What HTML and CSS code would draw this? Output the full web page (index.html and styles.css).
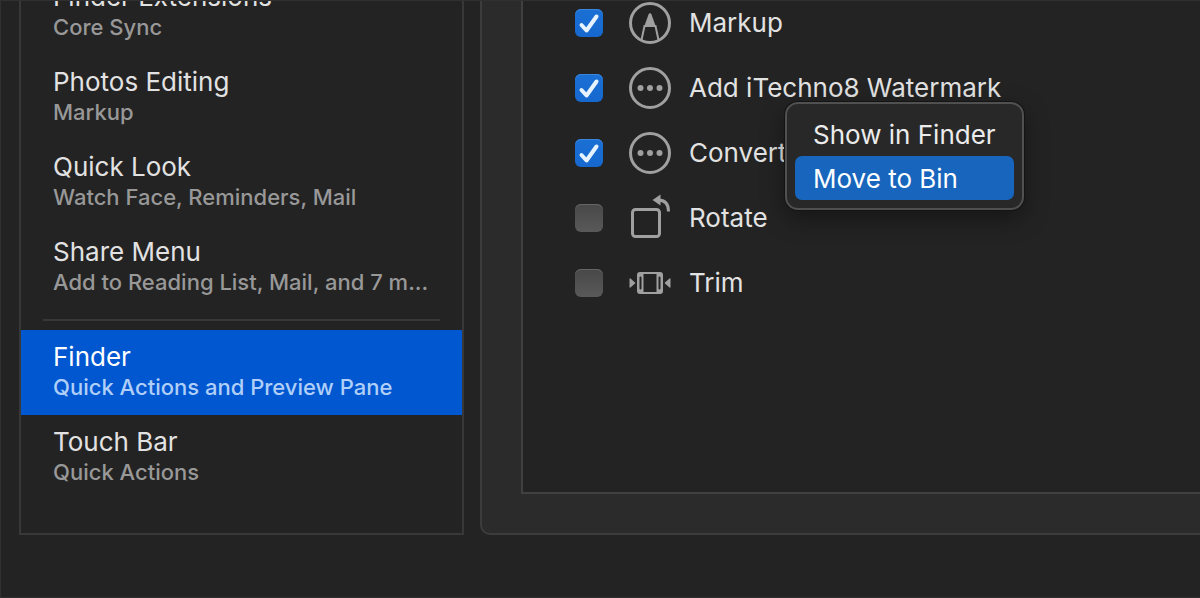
FILE: index.html
```html
<!DOCTYPE html>
<html lang="en">
<head>
    <meta charset="UTF-8">
    <meta name="viewport" content="width=device-width, initial-scale=1.0">
    <title>Extensions</title>
    <link rel="stylesheet" href="styles.css">
</head>
<body>
    <div class="window">
        <nav class="sidebar">
            <div class="categories">
                <a href="#" class="category">
                    <span class="name">Finder Extensions</span>
                    <span class="detail">Core Sync</span>
                </a>
                <a href="#" class="category">
                    <span class="name">Photos Editing</span>
                    <span class="detail">Markup</span>
                </a>
                <a href="#" class="category">
                    <span class="name">Quick Look</span>
                    <span class="detail">Watch Face, Reminders, Mail</span>
                </a>
                <a href="#" class="category">
                    <span class="name">Share Menu</span>
                    <span class="detail">Add to Reading List, Mail, and 7 m...</span>
                </a>
                <hr>
                <a href="#" class="category selected">
                    <span class="name">Finder</span>
                    <span class="detail">Quick Actions and Preview Pane</span>
                </a>
                <a href="#" class="category">
                    <span class="name">Touch Bar</span>
                    <span class="detail">Quick Actions</span>
                </a>
            </div>
        </nav>

        <main class="pane">
            <div class="panel">
                <ul class="actions">
                    <li>
                        <span class="check">
                            <input type="checkbox" id="markup" checked>
                            <svg viewBox="0 0 28 28"><path d="M6.5 16 L11.5 21.5 L21.5 7.5"/></svg>
                        </span>
                        <svg class="icon" viewBox="0 0 42 42">
                            <circle cx="21" cy="21" r="19.5"/>
                            <path class="thin" d="M12.5 38 L15.5 24 H26.5 L29.5 38"/>
                            <path class="solid" d="M15 25 L19.5 12.5 Q21 9.5 22.5 12.5 L27 25 Z"/>
                        </svg>
                        <label for="markup">Markup</label>
                    </li>
                    <li>
                        <span class="check">
                            <input type="checkbox" id="watermark" checked>
                            <svg viewBox="0 0 28 28"><path d="M6.5 16 L11.5 21.5 L21.5 7.5"/></svg>
                        </span>
                        <svg class="icon" viewBox="0 0 42 42">
                            <circle cx="21" cy="21" r="19.5"/>
                            <circle class="solid" cx="11.5" cy="21" r="3"/>
                            <circle class="solid" cx="21" cy="21" r="3"/>
                            <circle class="solid" cx="30.5" cy="21" r="3"/>
                        </svg>
                        <label for="watermark">Add iTechno8 Watermark</label>
                        <div class="menu" role="menu">
                            <button type="button" role="menuitem">Show in Finder</button>
                            <button type="button" role="menuitem" class="active">Move to Bin</button>
                        </div>
                    </li>
                    <li>
                        <span class="check">
                            <input type="checkbox" id="convert" checked>
                            <svg viewBox="0 0 28 28"><path d="M6.5 16 L11.5 21.5 L21.5 7.5"/></svg>
                        </span>
                        <svg class="icon" viewBox="0 0 42 42">
                            <circle cx="21" cy="21" r="19.5"/>
                            <circle class="solid" cx="11.5" cy="21" r="3"/>
                            <circle class="solid" cx="21" cy="21" r="3"/>
                            <circle class="solid" cx="30.5" cy="21" r="3"/>
                        </svg>
                        <label for="convert">Convert</label>
                    </li>
                    <li>
                        <span class="check">
                            <input type="checkbox" id="rotate">
                        </span>
                        <svg class="icon" viewBox="0 0 42 42">
                            <rect x="3.5" y="12.5" width="27" height="27" rx="3"/>
                            <path d="M29 3 C36 3 39.5 7 39.5 14.5"/>
                            <path class="solid" d="M23.5 3 L31.5 -2.5 V8.5 Z"/>
                        </svg>
                        <label for="rotate">Rotate</label>
                    </li>
                    <li>
                        <span class="check">
                            <input type="checkbox" id="trim">
                        </span>
                        <svg class="icon" viewBox="0 0 42 42">
                            <path class="solid" d="M0.5 17 Q0.5 16 1.5 16.5 L6 20.5 Q6.6 21 6 21.5 L1.5 25.5 Q0.5 26 0.5 25 Z"/>
                            <path class="solid" d="M41.5 17 Q41.5 16 40.5 16.5 L36 20.5 Q35.4 21 36 21.5 L40.5 25.5 Q41.5 26 41.5 25 Z"/>
                            <path class="solid" fill-rule="evenodd" d="M11 10 H31 Q34 10 34 13 V29 Q34 32 31 32 H11 Q8 32 8 29 V13 Q8 10 11 10 Z M14.5 12 V30 H27.5 V12 Z M10.5 15.5 V26.5 Q10.5 27.5 11.5 27.5 Q12.5 27.5 12.5 26.5 V15.5 Q12.5 14.5 11.5 14.5 Q10.5 14.5 10.5 15.5 Z M29.5 15.5 V26.5 Q29.5 27.5 30.5 27.5 Q31.5 27.5 31.5 26.5 V15.5 Q31.5 14.5 30.5 14.5 Q29.5 14.5 29.5 15.5 Z"/>
                        </svg>
                        <label for="trim">Trim</label>
                    </li>
                </ul>
            </div>
        </main>
    </div>
</body>
</html>
```
FILE: styles.css
```css
* {
    box-sizing: border-box;
}

body {
    margin: 0;
    background-color: #232323;
    color: #e2e2e2;
    font-family: Inter, "Liberation Sans", sans-serif;
    font-size: 26px;
    line-height: 30px;
}

.window {
    display: flex;
    align-items: stretch;
    gap: 16px;
    min-height: 100vh;
    padding: 0 0 62px 18px;
    border: 1px solid #303030;
    border-right: none;
    overflow: hidden;
}

/* left column */
.sidebar {
    flex: 0 0 445px;
    padding-bottom: 32px;
    border: 2px solid #383838;
    border-top: none;
    overflow: hidden;
}

/* scrolled a little, the first row is partly out of view */
.categories {
    margin-top: -31px;
}

.category {
    display: block;
    padding: 12px 28px 13px 32px;
    color: #e2e2e2;
    text-decoration: none;
    white-space: nowrap;
}

.category .name,
.category .detail {
    display: block;
}

.category .detail {
    color: #989898;
    font-size: 22px;
    font-weight: 500;
}

.category.selected {
    background-color: #0057d0;
    color: #fff;
}

.category.selected .detail {
    color: #b0cff8;
}

.sidebar hr {
    height: 2px;
    margin: 9px 22px;
    border: none;
    background-color: #383838;
}

/* right column */
.pane {
    flex: 1;
    display: flex;
    padding: 0 0 39px 39px;
    background-color: #2b2b2b;
    border: 2px solid #3c3c3c;
    border-width: 0 0 2px 2px;
    border-radius: 0 0 0 10px;
}

.panel {
    flex: 1;
    padding-left: 52px;
    background-color: #232323;
    border: 2px solid #404040;
    border-width: 0 0 2px 2px;
}

.actions {
    list-style: none;
    margin: -11px 0 0;
    padding: 0;
}

.actions li {
    position: relative;
    display: flex;
    align-items: center;
    height: 65px;
}

.check {
    position: relative;
    width: 28px;
    height: 28px;
    margin-right: 26px;
}

.check input {
    appearance: none;
    display: block;
    width: 28px;
    height: 28px;
    margin: 0;
    border-radius: 6px;
    background: linear-gradient(#484848, #595959);
    box-shadow: inset 0 1px 0 #666;
}

.check input:checked {
    background: linear-gradient(#1b70d4, #1668cf);
    box-shadow: inset 0 1px 0 #3a86dd;
}

.check svg {
    position: absolute;
    inset: 0;
    pointer-events: none;
    fill: none;
    stroke: #e6f3ff;
    stroke-width: 4;
    stroke-linecap: round;
    stroke-linejoin: round;
}

.icon {
    width: 42px;
    height: 42px;
    margin-right: 18px;
    overflow: visible;
    fill: none;
    stroke: #a0a0a0;
    stroke-width: 3;
}

.icon .thin {
    stroke-width: 2;
}

.icon .solid {
    fill: #a0a0a0;
    stroke: none;
}

/* context menu */
.menu {
    position: absolute;
    top: 47px;
    left: 210px;
    z-index: 1;
    padding: 8px;
    background-color: #282828;
    border: 2px solid #505050;
    border-radius: 13px;
    box-shadow: 0 0 0 1px #141414, 0 8px 24px rgba(0, 0, 0, 0.4);
}

.menu button {
    display: block;
    width: 100%;
    height: 44px;
    padding: 2px 18px 0;
    border: none;
    border-radius: 7px;
    background: none;
    color: #ececec;
    font: inherit;
    text-align: left;
    white-space: nowrap;
}

.menu button.active {
    background-color: #1765bc;
    color: #fff;
}
```
